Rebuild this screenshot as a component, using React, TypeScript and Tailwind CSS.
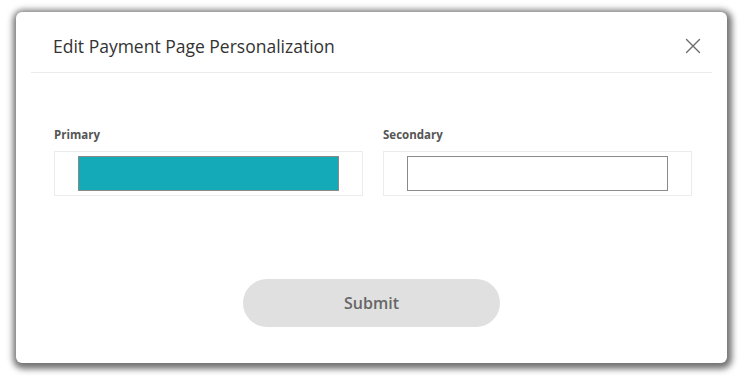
import React from "react";

function CloseIcon() {
  return (
    <svg width="16" height="16" viewBox="0 0 16 16" fill="none" stroke="#6b6b6b" strokeWidth="1.4" strokeLinecap="round">
      <path d="M1.5 1.5 L14.5 14.5 M14.5 1.5 L1.5 14.5" />
    </svg>
  );
}

function ColorField({ label, color }: { label: string; color: string }) {
  return (
    <div className="flex w-[309px] flex-col">
      <div className="h-[16px] text-[11.5px] font-bold leading-[16px] text-[#555]">{label}</div>
      <div className="mt-[8px] flex h-[45px] items-center border border-[#ececec] pl-[23px]">
        <div className="h-[35px] w-[261px] border border-[#8a8a8a]" style={{ backgroundColor: color }} />
      </div>
    </div>
  );
}

export default function App() {
  return (
    <div className="h-[376px] w-[744px] overflow-hidden bg-white pl-[16px] pt-[12px]" style={{ fontFamily: '"Open Sans", "Noto Sans", sans-serif' }}>
      <div className="flex h-[351px] w-[711px] flex-col rounded-[6px] bg-white shadow-[1px_2px_6px_4px_rgba(0,0,0,0.55)]">
        <div className="mx-[15px] flex h-[61px] items-center justify-between border-b border-[#ebebeb] pl-[22px] pr-[9px] pt-[8px]">
          <h1 className="text-[17.5px] font-normal text-[#333]">Edit Payment Page Personalization</h1>
          <button className="flex h-[20px] w-[20px] items-center justify-center">
            <CloseIcon />
          </button>
        </div>
        <div className="mt-[54px] flex gap-[20px] pl-[38px]">
          <ColorField label="Primary" color="#14aab8" />
          <ColorField label="Secondary" color="#ffffff" />
        </div>
        <div className="mt-[83px] flex justify-center">
          <button className="h-[48px] w-[257px] rounded-full bg-[#e0e0e0] text-[16px] font-semibold text-[#666]">
            Submit
          </button>
        </div>
      </div>
    </div>
  );
}
